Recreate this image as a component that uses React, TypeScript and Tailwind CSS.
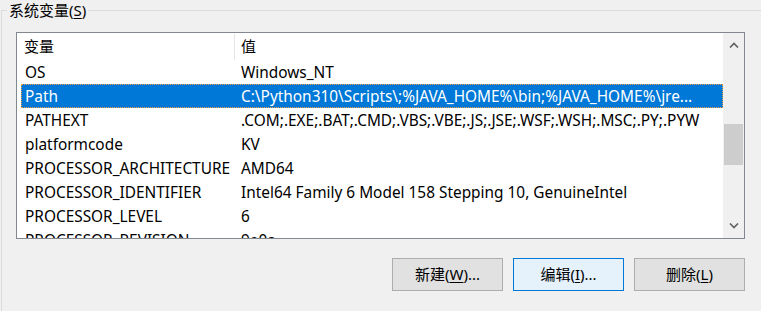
const rows = [
  { name: "OS", value: "Windows_NT" },
  { name: "Path", value: "C:\\Python310\\Scripts\\;%JAVA_HOME%\\bin;%JAVA_HOME%\\jre...", selected: true },
  { name: "PATHEXT", value: ".COM;.EXE;.BAT;.CMD;.VBS;.VBE;.JS;.JSE;.WSF;.WSH;.MSC;.PY;.PYW" },
  { name: "platformcode", value: "KV" },
  { name: "PROCESSOR_ARCHITECTURE", value: "AMD64" },
  { name: "PROCESSOR_IDENTIFIER", value: "Intel64 Family 6 Model 158 Stepping 10, GenuineIntel" },
  { name: "PROCESSOR_LEVEL", value: "6" },
  { name: "PROCESSOR_REVISION", value: "9e0a" },
];

const Chevron = ({ up }: { up?: boolean }) => (
  <svg width="10" height="6" viewBox="0 0 10 6" className="text-[#606060]">
    <path d={up ? "M1 5.5 L5 1.5 L9 5.5" : "M1 0.5 L5 4.5 L9 0.5"} fill="none" stroke="currentColor" strokeWidth="1.6" />
  </svg>
);

const Btn = ({ label, mnemonic, rest, focused }: { label: string; mnemonic: string; rest: string; focused?: boolean }) => (
  <button
    className={
      "w-[111px] h-[33px] border flex items-center justify-center text-[15px] text-black " +
      (focused ? "border-[#0078d7] bg-[#e5f1fb]" : "border-[#adadad] bg-[#e1e1e1]")
    }
  >
    {label}(<span className="underline underline-offset-2">{mnemonic}</span>){rest}
  </button>
);

export default function App() {
  return (
    <div
      className="w-[761px] h-[311px] bg-[#f0f0f0] overflow-hidden pl-[1px] pt-[10px]"
      style={{ fontFamily: '"Segoe UI", "Noto Sans", "Noto Sans CJK SC", sans-serif' }}
    >
      <div className="relative w-[762px] h-[330px] border border-[#dcdcdc] pl-[14px] pt-[21px]">
        <span className="absolute -top-[12px] left-[5px] px-[2px] bg-[#f0f0f0] text-[15px] leading-[22px] text-black">
          系统变量(<span className="underline underline-offset-2">S</span>)
        </span>

        <div className="w-[729px] h-[207px] border border-[#828790] bg-white flex">
          <div className="flex-1 overflow-hidden">
            <div className="h-[27px] flex items-center text-[15px] text-black">
              <div className="w-[217px] pl-[7px]">变量</div>
              <div className="w-px h-[26px] self-start mt-[1px] bg-[#e5e5e5]" />
              <div className="pl-[6px]">值</div>
            </div>
            {rows.map((r) => (
              <div
                key={r.name}
                className={
                  "ml-[4px] h-6 pt-[2px] grid grid-cols-[216px_1fr] items-center text-[15.4px] whitespace-nowrap " +
                  (r.selected ? "bg-[#0078d7] text-white outline-1 outline-dotted -outline-offset-1 outline-[#f0a040]" : "text-black")
                }
              >
                <div className="pl-[4px] overflow-hidden">{r.name}</div>
                <div className="pl-[4px] overflow-hidden">{r.value}</div>
              </div>
            ))}
          </div>
          <div className="w-[21px] bg-[#f0f0f0] flex flex-col items-center">
            <div className="h-[24px] flex items-center justify-center">
              <Chevron up />
            </div>
            <div className="h-[67px]" />
            <div className="w-[19px] h-[41px] bg-[#cdcdcd]" />
            <div className="flex-1" />
            <div className="h-[24px] flex items-center justify-center">
              <Chevron />
            </div>
          </div>
        </div>

        <div className="w-[729px] mt-[19px] flex justify-end gap-[10px]">
          <Btn label="新建" mnemonic="W" rest="..." />
          <Btn label="编辑" mnemonic="I" rest="..." focused />
          <Btn label="删除" mnemonic="L" rest="" />
        </div>
      </div>
    </div>
  );
}
